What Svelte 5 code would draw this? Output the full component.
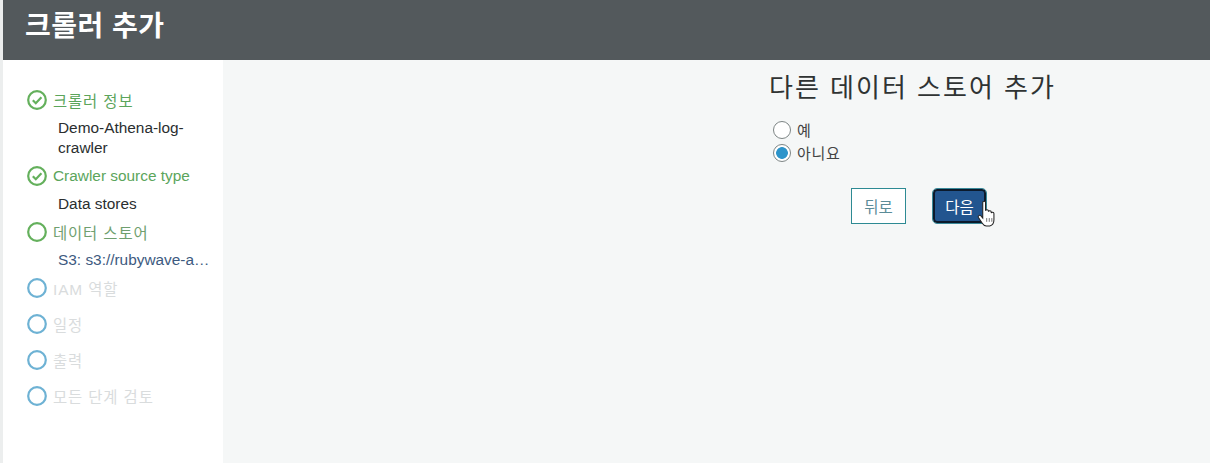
<script>
  const steps = [
    { label: '크롤러 정보', state: 'done', sub: 'Demo-Athena-log-crawler' },
    { label: 'Crawler source type', state: 'done', sub: 'Data stores', latin: true },
    { label: '데이터 스토어', state: 'active', sub: 'S3: s3://rubywave-a…', link: true },
    { label: 'IAM 역할', state: 'todo' },
    { label: '일정', state: 'todo' },
    { label: '출력', state: 'todo' },
    { label: '모든 단계 검토', state: 'todo' }
  ];
  let addAnother = $state('no');
</script>

<div class="page">
  <header>크롤러 추가</header>
  <div class="body">
    <nav>
      {#each steps as step}
        <div class="step {step.state}">
          <div class="row" class:latin={step.latin}>
            <svg width="20" height="20" viewBox="0 0 20 20">
              <circle cx="10" cy="10" r="8.8" fill="none" stroke-width="2.2" />
              {#if step.state === 'done'}
                <path d="M5.8 10.2l3 3 5.6-6" fill="none" stroke-width="2.2" />
              {/if}
            </svg>
            <span>{step.label}</span>
          </div>
          {#if step.sub}
            <div class="sub" class:link={step.link}>{step.sub}</div>
          {/if}
        </div>
      {/each}
    </nav>
    <main>
      <h2>다른 데이터 스토어 추가</h2>
      <label class="radio"><input type="radio" bind:group={addAnother} value="yes" /><i></i>예</label>
      <label class="radio"><input type="radio" bind:group={addAnother} value="no" /><i></i>아니요</label>
      <div class="actions">
        <button class="back">뒤로</button>
        <button class="next">다음</button>
        <svg class="cursor" width="20" height="28" viewBox="0 0 16 24">
          <path d="M5.2 2.2c0-1.500 2.400-1.500 2.400 0v7c.3-1.200 2.400-1.200 2.500.2v.6c.3-1.100 2.300-1 2.400.3v.8c.4-1 2.200-.8 2.300.5v5.400c0 2.600-1.300 4.800-3.500 5.200H8.200c-1.700-.1-2.600-1-3.400-2.300L1.500 15c-.8-1.300 1-2.600 2-1.500l1.700 2z" fill="#fff" stroke="#222" stroke-width=".9" />
          <path d="M8.600 15.500v3.200M10.800 15.500v3.200M13 15.500v3.200" stroke="#555" stroke-width=".7" fill="none" />
        </svg>
      </div>
    </main>
  </div>
</div>

<style>
  :global(body) {
    margin: 0;
    background: #f5f7f7;
  }
  .page {
    width: 1210px;
    height: 463px;
    overflow: hidden;
    display: flex;
    flex-direction: column;
    border-left: 3px solid #eceeee;
    box-sizing: border-box;
    font-family: "Liberation Sans", "Noto Sans CJK KR", sans-serif;
  }
  header {
    height: 60px;
    flex: none;
    box-sizing: border-box;
    padding: 9px 0 0 22px;
    background: #53595c;
    color: #fff;
    font-size: 28px;
    line-height: 36px;
    letter-spacing: .5px;
    font-weight: 700;
  }
  .body {
    flex: 1;
    display: flex;
    min-height: 0;
  }
  nav {
    width: 220px;
    flex: none;
    box-sizing: border-box;
    background: #fff;
    padding: 30px 8px 0 24px;
  }
  .step {
    padding-bottom: 8px;
  }
  .row {
    display: flex;
    align-items: center;
    height: 20px;
    margin-bottom: 8px;
    gap: 6px;
    font-size: 15.4px;
    letter-spacing: .9px;
    white-space: nowrap;
  }
  .row.latin {
    letter-spacing: 0;
  }
  .row svg {
    flex: none;
  }
  .done .row {
    color: #5ba55b;
  }
  .active .row {
    color: #6f9f6f;
  }
  .done circle,
  .done path,
  .active circle {
    stroke: #64b05c;
  }
  .todo circle {
    stroke: #6eb2d4;
  }
  .todo .row {
    color: #d9dcdd;
  }
  .sub {
    margin-left: 31px;
    font-size: 15.4px;
    line-height: 20px;
    color: #2a2e2f;
  }
  .sub.link {
    color: #3d5a80;
    white-space: nowrap;
  }
  main {
    flex: 1;
    padding: 11px 0 0 546px;
  }
  h2 {
    margin: 0 0 13px;
    font-size: 26px;
    line-height: 34px;
    font-weight: 400;
    letter-spacing: 2px;
    color: #2f3333;
    white-space: nowrap;
  }
  .radio {
    display: flex;
    align-items: center;
    height: 23px;
    margin-left: 4px;
    font-size: 15px;
    letter-spacing: .7px;
    color: #444;
    gap: 6px;
  }
  .radio input {
    position: absolute;
    opacity: 0;
    margin: 0;
  }
  .radio i {
    width: 16px;
    height: 16px;
    border: 1px solid #7d8585;
    border-radius: 50%;
    background: #fff;
  }
  .radio input:checked + i {
    background: radial-gradient(circle, #2d94ca 0 5.500px, #fff 6.200px);
  }
  .actions {
    position: relative;
    display: flex;
    align-items: center;
    gap: 26px;
    height: 36px;
    margin: 24px 0 0 82px;
  }
  button {
    width: 55px;
    height: 36px;
    padding: 0;
    font: inherit;
    font-size: 15.5px;
    box-sizing: border-box;
  }
  .back {
    background: #fff;
    border: 1px solid #2d8a93;
    color: #5b8c98;
  }
  .next {
    width: 53px;
    height: 34px;
    margin-left: 1px;
    background: #22558f;
    color: #fff;
    border: 2px solid #0b1a2c;
    border-radius: 4px;
    outline: 1px solid #3a8a9a;
  }
  .cursor {
    position: absolute;
    left: 125px;
    top: 12px;
  }
</style>
